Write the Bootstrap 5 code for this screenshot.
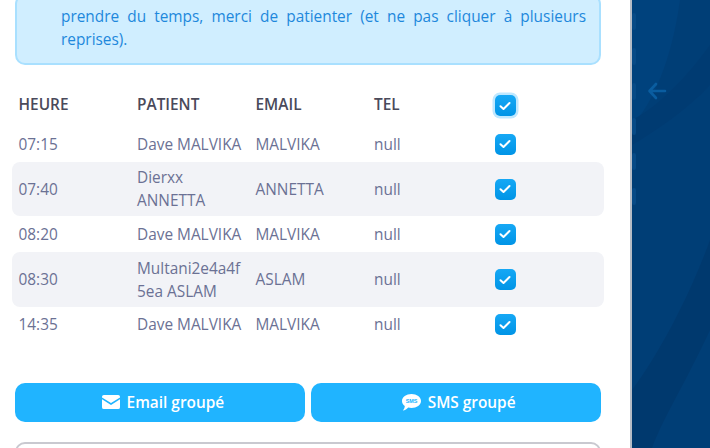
<!DOCTYPE html>
<html lang="fr">
<head>
<meta charset="utf-8">
<title>Rendez-vous</title>
<link href="https://cdn.jsdelivr.net/npm/bootstrap@5.3.0/dist/css/bootstrap.min.css" rel="stylesheet">
<style>
html,body{height:448px;overflow:hidden;background:#fff}
body{font-family:"Open Sans","Noto Sans",sans-serif;font-size:15.4px;color:#6b7194}
.app-shell{height:448px;display:flex;overflow:hidden}
.main-pane{width:630px;height:448px;flex:none;padding:0 29px 0 15px;overflow:hidden}
.side-pane{flex:1;background:#003e76;border-left:2px solid #b5bcc6;position:relative;overflow:hidden}
.side-pane svg.bgart{position:absolute;inset:0}
.info-box{background:#d0eeff;border:2px solid #a9e0ff;border-radius:10px;color:#1e88dc;padding:8.5px 13px 3px 44px;margin-top:-6px;height:71px;line-height:23px;text-align:justify}
.info-box p{margin:0}
.rdv-table{margin:21px 0 0 -3px;width:592px;display:flex;flex-direction:column}
.rdv-row{display:grid;grid-template-columns:118.5px 118.5px 118.5px 118.5px 1fr;align-items:center;padding:0 6.5px;border-radius:8px;line-height:23px}
.rdv-head{height:40px;font-weight:600;color:#4a4a5a}
.rdv-head>span:not(.chk){margin-top:-4px}
.rdv-one{height:36px}
.rdv-two{height:54.4px;background:#f2f3f7}
.chk{width:21px;height:21px;border-radius:5px;background:linear-gradient(#16a8f5,#0094e6);margin-left:2px;display:flex;align-items:center;justify-content:center}
.chk.on{box-shadow:0 0 0 2.5px #bfe8ff;margin-top:-1px}
.act-row{display:flex;gap:5.5px;margin-top:40.2px}
.act-btn{flex:1;height:39px;background:#20b4ff;border:0;border-radius:10px;color:#fff;font-weight:600;font-size:15.4px;display:flex;align-items:center;justify-content:center;gap:6.5px;padding:0 0 0 6px}
.act-btn:hover{background:#20b4ff;color:#fff}
.ghost-box{height:60px;margin-top:20px;border:2px solid #c9c9d0;border-radius:10px}
.sms-mini{font-family:"Liberation Sans",sans-serif;font-size:5.4px;font-weight:700;fill:#20b4ff}
.back-arrow{position:absolute;left:15px;top:82px}
</style>
</head>
<body>
<div class="app-shell">
  <main class="main-pane">
    <div class="info-box"><p>prendre du temps, merci de patienter (et ne pas cliquer à plusieurs reprises).</p></div>
    <div class="rdv-table">
      <div class="rdv-row rdv-head"><span>HEURE</span><span>PATIENT</span><span>EMAIL</span><span>TEL</span><span class="chk on"><svg width="12" height="10" viewBox="0 0 12 10"><path d="M1.5 5.2 4.5 8 10.5 2" fill="none" stroke="#fff" stroke-width="2" stroke-linecap="round" stroke-linejoin="round"/></svg></span></div>
      <div class="rdv-row rdv-one"><span>07:15</span><span class="text-nowrap">Dave MALVIKA</span><span>MALVIKA</span><span>null</span><span class="chk"><svg width="12" height="10" viewBox="0 0 12 10"><path d="M1.5 5.2 4.5 8 10.5 2" fill="none" stroke="#fff" stroke-width="2" stroke-linecap="round" stroke-linejoin="round"/></svg></span></div>
      <div class="rdv-row rdv-two"><span>07:40</span><span>Dierxx<br>ANNETTA</span><span>ANNETTA</span><span>null</span><span class="chk"><svg width="12" height="10" viewBox="0 0 12 10"><path d="M1.5 5.2 4.5 8 10.5 2" fill="none" stroke="#fff" stroke-width="2" stroke-linecap="round" stroke-linejoin="round"/></svg></span></div>
      <div class="rdv-row rdv-one"><span>08:20</span><span class="text-nowrap">Dave MALVIKA</span><span>MALVIKA</span><span>null</span><span class="chk"><svg width="12" height="10" viewBox="0 0 12 10"><path d="M1.5 5.2 4.5 8 10.5 2" fill="none" stroke="#fff" stroke-width="2" stroke-linecap="round" stroke-linejoin="round"/></svg></span></div>
      <div class="rdv-row rdv-two"><span>08:30</span><span>Multani2e4a4f<br>5ea ASLAM</span><span>ASLAM</span><span>null</span><span class="chk"><svg width="12" height="10" viewBox="0 0 12 10"><path d="M1.5 5.2 4.5 8 10.5 2" fill="none" stroke="#fff" stroke-width="2" stroke-linecap="round" stroke-linejoin="round"/></svg></span></div>
      <div class="rdv-row rdv-one"><span>14:35</span><span class="text-nowrap">Dave MALVIKA</span><span>MALVIKA</span><span>null</span><span class="chk"><svg width="12" height="10" viewBox="0 0 12 10"><path d="M1.5 5.2 4.5 8 10.5 2" fill="none" stroke="#fff" stroke-width="2" stroke-linecap="round" stroke-linejoin="round"/></svg></span></div>
    </div>
    <div class="act-row">
      <button type="button" class="btn act-btn"><svg width="18" height="14" viewBox="0 0 19 15" preserveAspectRatio="none"><path fill="#fff" d="M2 0h15a2 2 0 0 1 2 2v.6L9.500 8.600 0 2.600V2a2 2 0 0 1 2-2zM0 4.600l9.500 6 9.500-6V13a2 2 0 0 1-2 2H2a2 2 0 0 1-2-2z"/></svg>Email groupé</button>
      <button type="button" class="btn act-btn"><svg width="19" height="17" viewBox="0 0 19 17"><path fill="#fff" d="M9.500 0C14.700 0 19 3 19 7s-4.300 7-9.500 7c-1.200 0-2.300-.2-3.300-.5C5 14.800 3 16.500.8 16.500 2 15.300 2.700 13.800 2.800 12 1 10.800 0 9 0 7 0 3 4.300 0 9.500 0z"/><text class="sms-mini" x="9.500" y="9" text-anchor="middle">SMS</text></svg>SMS groupé</button>
    </div>
    <div class="ghost-box"></div>
  </main>
  <aside class="side-pane">
    <svg class="bgart" width="78" height="448" viewBox="0 0 78 448"><rect width="78" height="448" fill="#003e76"/><path d="M0 125C20 105 40 60 48 0H0z" fill="#00427d"/><path d="M0 390C30 350 60 290 78 240V330C55 380 30 420 20 448H0z" fill="#00396e"/><path d="M0 120C30 105 60 70 78 45V85C55 110 25 130 0 145z" fill="#003b72"/><g fill="#074a86"><rect x="0" y="13" width="4" height="17" rx="2"/><rect x="0" y="48" width="4" height="17" rx="2"/><rect x="0" y="83" width="4" height="17" rx="2"/><rect x="0" y="118" width="4" height="17" rx="2"/><rect x="0" y="153" width="4" height="17" rx="2"/><rect x="0" y="188" width="4" height="17" rx="2"/></g></svg>
    <svg class="back-arrow" width="20" height="18" viewBox="0 0 20 18"><path d="M18 9H3M9 2 2.500 9 9 16" fill="none" stroke="#0a5da0" stroke-width="2.600" stroke-linecap="round" stroke-linejoin="round"/></svg>
  </aside>
</div>
<script src="https://cdn.jsdelivr.net/npm/bootstrap@5.3.0/dist/js/bootstrap.bundle.min.js"></script>
</body>
</html>
